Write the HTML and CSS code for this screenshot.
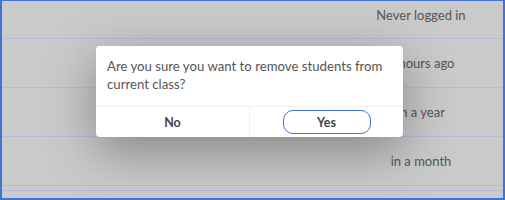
FILE: index.html
```html
<!DOCTYPE html>
<html lang="en">
<head>
    <meta charset="UTF-8">
    <meta name="viewport" content="width=device-width, initial-scale=1.0">
    <title>Remove students</title>
    <link rel="stylesheet" href="styles.css">
</head>
<body>
    <div class="frame">
        <div class="table">
            <div class="row first"><span class="when">Never logged in</span></div>
            <div class="row"><span class="when">2 hours ago</span></div>
            <div class="row"><span class="when">in a year</span></div>
            <div class="row"><span class="when">in a month</span></div>
            <div class="row last"></div>
        </div>

        <div class="modal">
            <p class="message">Are you sure you want to remove students from current class?</p>
            <div class="actions">
                <button class="btn">No</button>
                <button class="btn"><span class="yes">Yes</span></button>
            </div>
        </div>
    </div>
</body>
</html>
```

FILE: styles.css
```css
html, body {
    margin: 0;
    padding: 0;
}
body {
    font-family: Lato, "Noto Sans", sans-serif;
    background: #cbcbcb;
}
.frame {
    position: relative;
    width: 505px;
    height: 200px;
    box-sizing: border-box;
    border: 2px solid #3f73d6;
    border-top-width: 1px;
    overflow: hidden;
    background: #cacaca;
}
.table {
    display: flex;
    flex-direction: column;
}
.row {
    height: 48px;
    border-bottom: 1px solid #b5bdd6;
    display: flex;
    align-items: center;
    justify-content: flex-end;
    padding-right: 22px;
    font-size: 13px;
    color: #555;
}
.when {
    width: 120px;
    text-align: center;
}
.row.first {
    box-sizing: content-box;
    height: 27px;
    padding-bottom: 10px;
}
.row.last {
    height: 4px;
}
.modal {
    position: absolute;
    left: 94px;
    top: 45px;
    width: 307px;
    background: #fff;
    border-radius: 4px;
    box-shadow: 0 14px 50px rgba(0,0,0,0.35);
}
.message {
    margin: 0;
    padding: 11px 8px 13px 11px;
    font-size: 13.2px;
    line-height: 18px;
    color: #555;
}
.actions {
    display: flex;
    border-top: 1px solid #f0f0f0;
}
.btn {
    flex: 1;
    height: 30px;
    background: none;
    border: none;
    font-family: inherit;
    font-size: 12.5px;
    font-weight: 700;
    color: #444;
    display: flex;
    align-items: center;
    justify-content: center;
}
.btn + .btn {
    border-left: 1px solid #f0f0f0;
}
.yes {
    display: inline-flex;
    align-items: center;
    justify-content: center;
    width: 86px;
    height: 22px;
    border: 1.5px solid #3f73d6;
    border-radius: 10px;
}
```
